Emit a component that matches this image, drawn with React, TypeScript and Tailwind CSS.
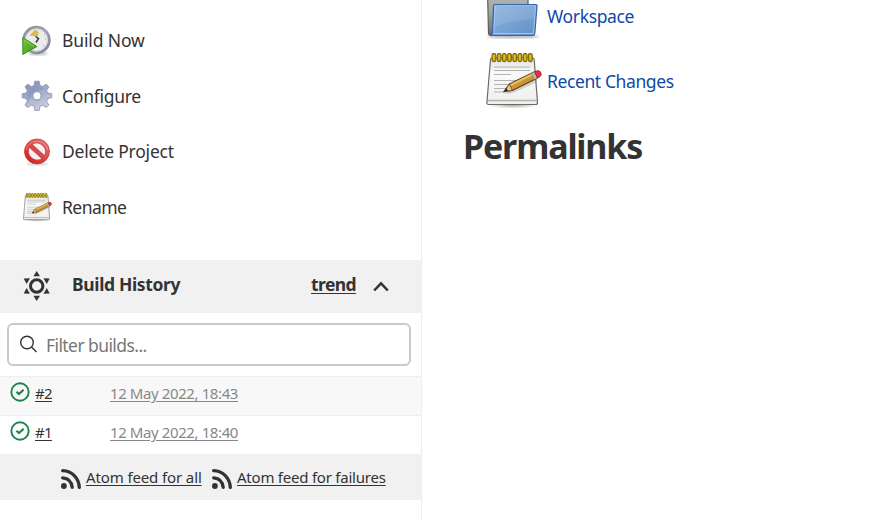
import React from "react";

function Notepad({ className }: { className: string }) {
  return (
    <svg className={className} viewBox="0 0 56 56">
      <defs>
        <linearGradient id="paper" x1="0" y1="0" x2="0" y2="1">
          <stop offset="0" stopColor="#e2e2e0" />
          <stop offset=".35" stopColor="#fafafa" />
          <stop offset="1" stopColor="#eeeeec" />
        </linearGradient>
        <radialGradient id="shade">
          <stop offset="0" stopColor="#777" stopOpacity=".65" />
          <stop offset="1" stopColor="#777" stopOpacity="0" />
        </radialGradient>
      </defs>
      <ellipse cx="27" cy="52" rx="25" ry="3.6" fill="url(#shade)" />
      <path d="M6.5 4.500H46Q48 4.500 48.200 6.500L51.500 49.500Q51.500 51.500 49.500 51.500H2.500Q.8 51.500 .9 49.500L4.500 6.500Q4.700 4.500 6.500 4.500Z" fill="url(#paper)" stroke="#6b6c68" strokeWidth="1.200" />
      <path d="M2 47.500H51" stroke="#b5b5b2" strokeWidth="1.600" />
      <path d="M8 14H44M8 17.500H44M8 21.500H25M8 27.500H42M8 31.500H38M8 35.500H27M8 39H20" stroke="#b4b4b4" strokeWidth="1.200" />
      {[8, 13.200, 18.400, 23.600, 28.800, 34, 39.200, 44.400].map((x) => (
        <g key={x}>
          <rect x={x - 1.900} y=".6" width="3.700" height="8" rx="1.500" fill="#c9ad10" stroke="#806b08" strokeWidth="1.200" />
          <path d={`M${x - 0.300} 2V6`} stroke="#e5cf3c" strokeWidth=".9" />
        </g>
      ))}
      <path d="M18 40Q30 37 51 25L51 29Q35 37 23 41Z" fill="#666" opacity=".25" />
      <path d="M18 38.500L23.500 31 48 19 51.500 25 26.500 37.500Z" fill="#c9933a" stroke="#5f3e0c" strokeWidth="1.100" />
      <path d="M24 32.500L48 20.500" stroke="#e8bd64" strokeWidth="2" />
      <path d="M18 38.500L23.500 31 26.500 37.500Z" fill="#e6c590" stroke="#5f3e0c" strokeWidth=".8" />
      <path d="M18 38.500L20.500 35 21.800 37.700Z" fill="#222" />
      <path d="M45.500 20.200L48.500 26.500 51.500 25 48.500 18.700Z" fill="#b9b9b9" stroke="#777" strokeWidth=".5" />
      <path d="M48.500 18.700L52 17.500Q55 18 55.300 21.500 54.500 24 51.500 25Z" fill="#e8313a" stroke="#971b22" strokeWidth=".8" />
    </svg>
  );
}

function Folder() {
  return (
    <svg className="block h-[64px] w-[56px] shrink-0" viewBox="0 0 56 64">
      <defs>
        <linearGradient id="folder" x1="0" y1="0" x2="1" y2="1">
          <stop offset="0" stopColor="#8cb3df" />
          <stop offset=".5" stopColor="#78a3d4" />
          <stop offset="1" stopColor="#628fc5" />
        </linearGradient>
        <linearGradient id="back" x1="0" y1="0" x2="0" y2="1">
          <stop offset="0" stopColor="#b8b8b6" />
          <stop offset=".5" stopColor="#a2a2a0" />
          <stop offset="1" stopColor="#6d6e6b" />
        </linearGradient>
        <filter id="folderShade"><feGaussianBlur stdDeviation="1.2" /></filter>
      </defs>
      <ellipse cx="27" cy="61.500" rx="26" ry="2" fill="#667" opacity=".45" filter="url(#folderShade)" />
      <path d="M1.500 16H40Q42 16 42 18V60H4Q2.500 60 2.500 58Z" fill="url(#back)" stroke="#5d5e5c" strokeWidth="1.200" />
      <path d="M8.500 29.500H49.500Q51.200 29.500 51 31L48.800 58.500Q48.500 60.500 46.500 60.500H4.500Q6.500 59 6.600 57L7.500 31Q7.500 29.500 8.500 29.500Z" fill="url(#folder)" stroke="#3465a4" strokeWidth="1.200" />
      <path d="M9 30.800H49.500L47.500 58.500H7.800Z" fill="none" stroke="#b0cef0" strokeWidth=".8" />
      <path d="M9 32H49L48 44Q28 44 8.500 52Z" fill="#fff" opacity=".1" />
    </svg>
  );
}

function ClockIcon() {
  return (
    <svg className="h-[32px] w-[32px]" viewBox="0 0 32 32">
      <defs>
        <linearGradient id="rim" x1="0" y1="0" x2="1" y2="1">
          <stop offset="0" stopColor="#8d8d98" />
          <stop offset=".5" stopColor="#a3a3b4" />
          <stop offset="1" stopColor="#7c7c91" />
        </linearGradient>
        <linearGradient id="play" x1="0" y1="0" x2="1" y2="1">
          <stop offset="0" stopColor="#7dcc3c" />
          <stop offset="1" stopColor="#349410" />
        </linearGradient>
        <filter id="soft"><feGaussianBlur stdDeviation="1" /></filter>
      </defs>
      <ellipse cx="17" cy="28.500" rx="10" ry="2" fill="#666" opacity=".35" filter="url(#soft)" />
      <circle cx="15.500" cy="15" r="12.800" fill="#ececee" stroke="url(#rim)" strokeWidth="2.800" />
      <circle cx="15.500" cy="15" r="11" fill="none" stroke="#d1d1dc" strokeWidth=".9" />
      <path d="M17 11.500L8.500 10.500 13.500 5Q17 5 17.500 7.500Z" fill="#dcb94e" />
      <path d="M14.500 11.500L17.500 13.500 15 17.500" fill="none" stroke="#39372f" strokeWidth="1.500" />
      <path d="M24 14h1M23 9h1M22 21h1" stroke="#a8a8a8" />
      <path d="M1.800 12.500L15.800 21.500 1.800 29.500Z" fill="url(#play)" stroke="#2e860f" strokeWidth=".9" />
      <path d="M2.800 14.500L13 21.500" stroke="#8fd35e" strokeWidth=".9" />
    </svg>
  );
}

function GearIcon() {
  return (
    <svg className="h-[32px] w-[32px]" viewBox="0 0 32 32">
      <defs>
        <linearGradient id="gear" x1="0" y1="0" x2=".4" y2="1">
          <stop offset="0" stopColor="#7688ad" />
          <stop offset=".5" stopColor="#a0acc9" />
          <stop offset="1" stopColor="#c9cbdd" />
        </linearGradient>
      </defs>
      <path
        fillRule="evenodd"
        fill="url(#gear)"
        stroke="#8a90a8"
        strokeWidth=".8"
        d="M13.800 1.200H18.200L19 5.500 21.500 6.500 25.300 4.200 27.800 6.800 25.600 10.500 26.700 13 30.800 13.800V17.700L26.700 18.600 25.600 21.200 27.800 25 25.300 27.500 21.500 25.200 19 26.300 18.200 30.500H13.800L13 26.300 10.400 25.200 6.700 27.500 4 25 6.300 21.200 5.200 18.600 1.200 17.700V13.800L5.200 13 6.300 10.500 4 6.800 6.700 4.200 10.400 6.500 13 5.500ZM16 11.800A4 4 0 1 0 16 19.800A4 4 0 1 0 16 11.800Z"
      />
      <path d="M16 6L23 9 16 11A5 5 0 0 0 11 16L7 22 6 15 10 8Z" fill="#617caf" opacity=".25" />
      <circle cx="16" cy="15.800" r="4.600" fill="none" stroke="#95a0bd" strokeWidth=".8" />
    </svg>
  );
}

function DeleteIcon() {
  return (
    <svg className="h-[32px] w-[32px]" viewBox="0 0 32 32">
      <defs>
        <linearGradient id="stop" x1="0" y1="0" x2="0" y2="1">
          <stop offset="0" stopColor="#e86a6a" />
          <stop offset="1" stopColor="#d02525" />
        </linearGradient>
      </defs>
      <ellipse cx="16" cy="28" rx="11" ry="2" fill="#999" opacity=".25" />
      <circle cx="16" cy="15.500" r="10.500" fill="#f2f0f0" />
      <g transform="rotate(42 16 15.500)">
        <path fillRule="evenodd" d="M16 3A12.500 12.500 0 1 1 16 28A12.500 12.500 0 1 1 16 3ZM7.500 13.500H24.500A8.900 8.900 0 0 0 7.500 13.500ZM7.500 17.500H24.500A8.900 8.900 0 0 1 7.500 17.500Z" fill="url(#stop)" stroke="#c63636" strokeWidth=".7" />
      </g>
      <path d="M5.200 14A11 11 0 0 1 26.800 14" fill="none" stroke="#f5a0a0" strokeWidth="1" opacity=".7" />
    </svg>
  );
}

function Sun() {
  return (
    <svg className="mb-[2px] h-[32px] w-[32px] text-[#333]" viewBox="0 0 32 32">
      <circle cx="15.700" cy="16" r="6.200" fill="none" stroke="currentColor" strokeWidth="3" />
      {[0, 60, 120, 180, 240, 300].map((a) => (
        <path key={a} d="M15.700 1L19 6.300H12.400Z" fill="currentColor" transform={`rotate(${a} 15.700 16)`} />
      ))}
    </svg>
  );
}

function Success() {
  return (
    <svg className="mb-[2px] h-[20px] w-[20px]" viewBox="0 0 20 20" fill="none" stroke="#1e8449">
      <circle cx="10" cy="10" r="8.700" strokeWidth="1.900" />
      <path d="M6.500 9.700L9 12.100 13.600 7.800" strokeWidth="2.200" />
    </svg>
  );
}

function Rss() {
  return (
    <svg className="h-[20px] w-[20px] shrink-0" viewBox="0 0 20 20" fill="none" stroke="#333" strokeWidth="3.300" strokeLinecap="round">
      <circle cx="2.900" cy="17" r="2.900" fill="#333" stroke="none" />
      <path d="M1.700 8.800Q10.300 9.600 11.200 18.300M1.700 1.700C11 2 17.800 9 18.300 18.300" />
    </svg>
  );
}

const tasks = [
  { label: "Build Now", icon: <ClockIcon />, text: "pb-[2px] tracking-[-0.12px]" },
  { label: "Configure", icon: <GearIcon />, text: "tracking-[-0.26px]" },
  { label: "Delete Project", icon: <DeleteIcon />, text: "pb-[2px] tracking-[-0.22px]" },
  { label: "Rename", icon: <Notepad className="h-[29px] w-[29px]" />, text: "pb-[2px] tracking-[-0.55px]" },
];

const builds = [
  { id: "#2", date: "12 May 2022, 18:43", row: "bg-[#f8f8f8]" },
  { id: "#1", date: "12 May 2022, 18:40", row: "bg-white" },
];

export default function App() {
  return (
    <div className="flex h-[520px] w-[884px] overflow-hidden bg-white font-['Noto_Sans',sans-serif] text-[#333]">
      <aside className="w-[422px] shrink-0 border-r border-[#eeeeee]">
        <nav className="flex h-[260px] flex-col pt-[13px]">
          {tasks.map((t) => (
            <a key={t.label} className="flex h-[55.6px] items-center pl-[21px]">
              <span className="flex w-[41px] shrink-0 items-center [&>svg]:block">
                <span className="flex w-[32px] justify-center">{t.icon}</span>
              </span>
              <span className={`whitespace-nowrap text-[17.5px] leading-6 ${t.text}`}>{t.label}</span>
            </a>
          ))}
        </nav>
        <header className="flex h-[53px] items-center bg-[#f1f1f1] pl-[21px] pr-[32px]">
          <Sun />
          <b className="ml-[19px] pb-[5px] text-[17.5px] font-bold leading-6 tracking-[-0.36px]">Build History</b>
          <b className="ml-auto pb-[5px] text-[17.500px] font-bold leading-6 tracking-[-0.6px] underline decoration-1 underline-offset-2">trend</b>
          <svg className="ml-[17px] h-[16px] w-[16px]" viewBox="0 0 16 16" fill="none" stroke="#333" strokeWidth="2.500">
            <path d="M1.200 11.500L8 4.400 14.800 11.500" />
          </svg>
        </header>
        <div className="h-[63px] px-[7px] pt-[10px]">
          <div className="flex h-[43px] w-[404px] items-center rounded-[6px] border-2 border-[#c4cbd1] pl-[11px]">
            <svg className="mb-[2px] h-[18px] w-[18px]" viewBox="0 0 18 18" fill="none" stroke="#333" strokeWidth="1.400">
              <circle cx="7" cy="7.500" r="6.300" />
              <path d="M11.500 12L16.500 17" />
            </svg>
            <span className="ml-[8px] text-[17.500px] leading-6 tracking-[-0.58px] text-[#777]">Filter builds...</span>
          </div>
        </div>
        {builds.map((b) => (
          <div key={b.id} className={`flex h-[39px] items-center border-t border-[#eeeeee] pb-[6px] pl-[10px] text-[15px] leading-5 ${b.row}`}>
            <Success />
            <a className="ml-[5px] w-[75px] tracking-[-0.7px] underline decoration-1 underline-offset-2">{b.id}</a>
            <a className="tracking-[-0.4px] text-[#888] underline decoration-1 underline-offset-2">{b.date}</a>
          </div>
        ))}
        <footer className="flex h-[46px] items-center bg-[#f1f1f1] pl-[61px] text-[15px] leading-5">
          <span className="pt-[4px]"><Rss /></span>
          <a className="ml-[5px] whitespace-nowrap tracking-[-0.12px] underline decoration-1 underline-offset-2">Atom feed for all</a>
          <span className="ml-auto pt-[4px]"><Rss /></span>
          <a className="ml-[5px] w-[184px] shrink-0 whitespace-nowrap tracking-[-0.23px] underline decoration-1 underline-offset-2">Atom feed for failures</a>
        </footer>
      </aside>
      <main className="pl-[41px] text-[#0b4aa8]">
        <div className="-mt-[25px] flex h-[76px] items-start pl-[23px]">
          <Folder />
          <a className="ml-[5px] mt-[29px] text-[17.500px] leading-6 tracking-[-0.36px]">Workspace</a>
        </div>
        <div className="flex h-[60px] items-center pl-[23px]">
          <Notepad className="h-[56px] w-[56px]" />
          <a className="ml-[5px] text-[17.500px] leading-6 tracking-[-0.4px]">Recent Changes</a>
        </div>
        <h1 className="mt-[12px] text-[34px] font-bold leading-[46px] tracking-[-1.15px] text-[#333]">Permalinks</h1>
      </main>
    </div>
  );
}
